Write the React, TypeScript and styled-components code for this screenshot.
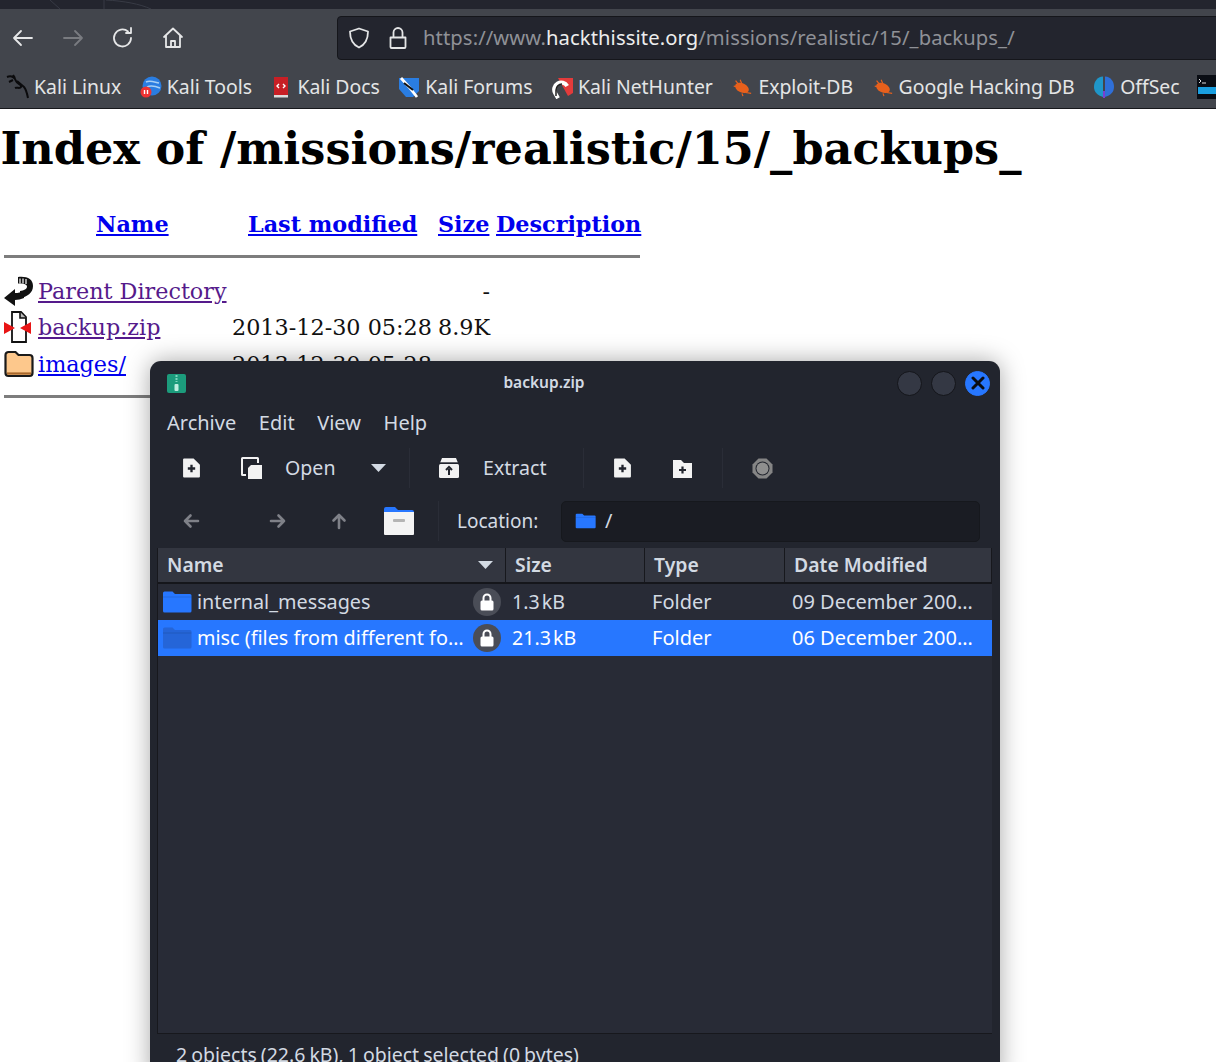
import React from "react"
import styled, { createGlobalStyle } from "styled-components"

const uiFont = `"Noto Sans", "Open Sans", sans-serif`
const pageFont = `"DejaVu Serif", serif`

const GlobalStyle = createGlobalStyle`
  html, body {
    margin: 0;
    padding: 0;
    height: 100%;
    background: #fff;
    overflow: hidden;
  }
`

const Page = styled.div`
  position: relative;
  width: 1216px;
  height: 1062px;
  overflow: hidden;
  display: flex;
  flex-direction: column;
`

const TopStrip = styled.div`
  height: 9px;
  flex: none;
  background: #23252e;
  line-height: 0;
`

const NavBar = styled.div`
  height: 58px;
  flex: none;
  background: #42454c;
  display: flex;
  align-items: center;
  padding-left: 11px;
`

const NavButton = styled.div<{ $gap: number }>`
  width: 24px;
  height: 24px;
  margin-right: ${(p) => p.$gap}px;
  flex: none;
`

const UrlBar = styled.div`
  margin-left: 152px;
  margin-top: -1px;
  flex: 1;
  height: 44px;
  margin-right: -12px;
  box-sizing: border-box;
  background: #23252e;
  border: 1px solid #15161b;
  border-radius: 4px;
  display: flex;
  align-items: center;
  padding-left: 9px;
  gap: 17px;
  font: 20.2px/1 ${uiFont};
  color: #8f9197;
`

const UrlText = styled.span`
  margin-left: -2px;
  white-space: nowrap;
  letter-spacing: 0.1px;
`

const Domain = styled.span`
  color: #eceded;
`

const Bookmarks = styled.div`
  height: 42px;
  flex: none;
  box-sizing: border-box;
  padding: 0 0 2px 6px;
  background: #42454c;
  border-bottom: 1px solid #17181c;
  display: flex;
  align-items: center;
  gap: 17.5px;
  overflow: hidden;
  font: 19.4px/1.3 ${uiFont};
  color: #e4e5e6;
  white-space: nowrap;
`

const Bookmark = styled.div`
  display: flex;
  align-items: center;
  gap: 4px;
  flex: none;
`

const BookmarkIcon = styled.div`
  width: 24px;
  height: 24px;
  display: flex;
  align-items: center;
  justify-content: center;
  flex: none;
`

const Content = styled.main`
  font: 22.3px/36.5px ${pageFont};
  color: #111;
  flex: 1;
`

const Title = styled.h1`
  margin: 14px 0 0 0.5px;
  font: bold 44.6px/52px ${pageFont};
  white-space: nowrap;
  color: #000;
`

const Listing = styled.div`
  margin: 31px 0 0 4px;
  width: 636px;
`

const Row = styled.div`
  display: grid;
  grid-template-columns: 34px 194px 206px 52px 1fr;
  align-items: center;
  height: 36.5px;
  white-space: nowrap;
`

const HeadCell = styled.span<{ $indent?: number }>`
  margin-left: ${(p) => p.$indent || 0}px;
  font-weight: bold;
`

const Rule = styled.div<{ $before: number; $after: number }>`
  height: 3px;
  background: #7d7d7d;
  margin: ${(p) => p.$before}px 0 ${(p) => p.$after}px;
`

const FileLink = styled.a<{ $visited?: boolean }>`
  color: ${(p) => (p.$visited ? "#551a8b" : "#0000ee")};
  text-decoration: underline;
`

const Num = styled.span`
  text-align: right;
`

const Window = styled.section`
  position: absolute;
  left: 150px;
  top: 361px;
  width: 850px;
  height: 720px;
  background: #22252e;
  border-radius: 11px 11px 0 0;
  box-shadow: 0 0 24px rgba(0, 0, 0, 0.35);
  display: flex;
  flex-direction: column;
  font: 20px/1.4 ${uiFont};
  color: #d3dae3;
`

const TitleBar = styled.div`
  height: 44px;
  position: relative;
  display: flex;
  align-items: center;
  justify-content: center;
  flex: none;
  font-weight: 600;
  font-size: 15.5px;
  padding-right: 62px;
`

const AppIcon = styled.div`
  position: absolute;
  left: 17px;
  top: 13px;
  width: 19px;
  height: 19px;
`

const WinButtons = styled.div`
  position: absolute;
  right: 10px;
  top: 9.5px;
  display: flex;
  gap: 9px;
`

const WinButton = styled.div<{ $active?: boolean }>`
  width: 25px;
  height: 25px;
  border-radius: 50%;
  box-sizing: border-box;
  background: ${(p) => (p.$active ? "#2777ff" : "#343844")};
  border: 1.5px solid ${(p) => (p.$active ? "#2777ff" : "#14151a")};
  display: flex;
  align-items: center;
  justify-content: center;
`

const MenuBar = styled.div`
  height: 36px;
  display: flex;
  align-items: center;
  padding-left: 17px;
  gap: 22.6px;
  flex: none;
`

const Toolbar = styled.div`
  height: 54px;
  display: flex;
  align-items: center;
  flex: none;
  padding-left: 10px;
`

const ToolItem = styled.div<{ $w: number; $ml?: number }>`
  width: ${(p) => p.$w}px;
  margin-left: ${(p) => p.$ml || 0}px;
  height: 100%;
  display: flex;
  align-items: center;
  justify-content: center;
  flex: none;
`

const ToolLabel = styled.span<{ $w: number; $ml?: number }>`
  width: ${(p) => p.$w}px;
  margin-left: ${(p) => p.$ml || 0}px;
  font-size: 19.6px;
  flex: none;
`

const Separator = styled.div<{ $ml?: number }>`
  width: 1px;
  height: 40px;
  margin-left: ${(p) => p.$ml || 0}px;
  background: #2a2d37;
  flex: none;
`

const LocationBar = styled.div`
  height: 52px;
  display: flex;
  align-items: center;
  flex: none;
  padding-left: 10px;
`

const LocationLabel = styled.span`
  width: 81px;
  margin: 0 23px 0 18px;
  font-size: 19px;
  white-space: nowrap;
`

const LocationField = styled.div`
  width: 419px;
  height: 41px;
  box-sizing: border-box;
  background: #1a1c23;
  border: 1px solid #16181d;
  border-radius: 5px;
  display: flex;
  align-items: center;
  gap: 9px;
  padding-left: 13px;
  color: #d3dae3;
`

const FileTable = styled.div`
  margin: 1px 8px 0 8px;
  height: 486px;
  flex: none;
  background: #282b36;
  border-bottom: 1px solid #17181d;
  box-shadow: -1px 0 0 #17181d;
  box-sizing: border-box;
  display: flex;
  flex-direction: column;
`

const TableHead = styled.div`
  height: 36px;
  flex: none;
  display: grid;
  grid-template-columns: 348px 139px 140px 1fr;
  background: #333640;
  border-bottom: 2px solid #15161b;
  box-sizing: border-box;
`

const HeaderCell = styled.div`
  display: flex;
  align-items: center;
  justify-content: space-between;
  padding: 0 12px 0 9px;
  border-right: 1px solid #17181d;
  font-weight: 600;
  font-size: 19.4px;
  color: #d3dae3;
`

const FileRow = styled.div<{ $selected?: boolean }>`
  height: 36px;
  flex: none;
  display: grid;
  grid-template-columns: 347px 140px 140px 1fr;
  align-items: center;
  background: ${(p) => (p.$selected ? "#2777ff" : "transparent")};
  color: ${(p) => (p.$selected ? "#fff" : "#d3dae3")};
`

const NameCell = styled.div`
  display: flex;
  align-items: center;
  padding-left: 4px;
  min-width: 0;
  svg {
    flex: none;
  }
`

const FileName = styled.span`
  margin-left: 5px;
  width: 274px;
  font-size: 19.8px;
  white-space: nowrap;
  overflow: hidden;
  text-overflow: ellipsis;
`

const LockBadge = styled.div`
  width: 28px;
  height: 28px;
  border-radius: 50%;
  background: #4a4d57;
  margin-left: 2px;
  flex: none;
  display: flex;
  align-items: center;
  justify-content: center;
`

const TextCell = styled.div`
  padding-left: 7px;
  padding-right: 14px;
  white-space: nowrap;
  overflow: hidden;
  text-overflow: ellipsis;
`

const SizeCell = styled(TextCell)`
  font-size: 19.6px;
  word-spacing: -3px;
`

const StatusBar = styled.div`
  padding: 7px 0 0 26px;
  font-size: 19.5px;
  word-spacing: -1px;
  white-space: nowrap;
`

const Stroke = ({ d, color = "#e6e7e8", w = 1.8 }: { d: string; color?: string; w?: number }) => (
  <svg width="24" height="24" viewBox="0 0 24 24" fill="none" stroke={color} strokeWidth={w} strokeLinecap="round" strokeLinejoin="round">
    <path d={d} />
  </svg>
)

const WallpaperLines = () => (
  <svg width="1216" height="9" viewBox="0 0 1216 9" fill="none" stroke="#383b45" strokeWidth="1">
    <path d="M50 0l10 9M104 0v9M106 0c18 1 34 4 45 9" />
  </svg>
)

const Shield = () => (
  <svg width="24" height="24" viewBox="0 0 24 24" fill="none" stroke="#e4e5e6" strokeWidth="1.8" strokeLinejoin="round">
    <path d="M12 2.5 21 5.5c0 8-2.5 13-9 16-6.5-3-9-8-9-16z" />
  </svg>
)

const Lock = () => (
  <svg width="20" height="24" viewBox="0 0 20 24" fill="none" stroke="#e4e5e6" strokeWidth="1.8" strokeLinejoin="round">
    <path d="M2.5 11.5h15v9.5a1 1 0 0 1-1 1h-13a1 1 0 0 1-1-1zM5.5 11.5V6.5a4.5 4.5 0 0 1 9 0v5" />
  </svg>
)

const Dragon = () => (
  <svg width="24" height="26" viewBox="0 0 24 26" fill="none" stroke="#0b0b0d" strokeWidth="2">
    <path d="M1 3c5-2 8 1 9 4s6 3 5 6c-1 2-4 0-6 1M11 7l7 6c2 2 3 6 4 11M3 8l4-2M9 4l-2-3" />
  </svg>
)

const ToolsIcon = () => (
  <svg width="22" height="24" viewBox="0 0 22 24">
    <circle cx="12" cy="11" r="9.5" fill="#2a7de1" />
    <path d="M6 7c4-2 8 0 13 1M7 12c4-2 8-1 13 1" stroke="#a8d0f5" strokeWidth="1.5" fill="none" />
    <circle cx="6" cy="17" r="5.5" fill="#e33" />
    <path d="M4.5 15v4M7.5 15v4" stroke="#fff" strokeWidth="1.4" />
  </svg>
)

const DocsIcon = () => (
  <svg width="18" height="24" viewBox="0 0 18 24">
    <rect x="2" y="2" width="14" height="18" fill="#c81f25" />
    <rect x="2" y="20" width="14" height="2.5" fill="#ddd" />
    <path d="M7 9l-2 2 2 2M11 9l2 2-2 2" stroke="#fff" strokeWidth="1.4" fill="none" />
  </svg>
)

const ForumsIcon = () => (
  <svg width="24" height="24" viewBox="0 0 24 24">
    <path d="M2 3h20v13l-6 6H9L2 14z" fill="#2a7de1" />
    <path d="M4 3l8 9 8 10" stroke="#fff" strokeWidth="2.8" fill="none" />
    <path d="M7 8l9 7" stroke="#111" strokeWidth="2" />
  </svg>
)

const HunterIcon = () => (
  <svg width="24" height="24" viewBox="0 0 24 24">
    <path d="M8 3h15v15l-5 3z" fill="#e33b3b" />
    <path d="M4 20v-6a7 7 0 0 1 14 0" stroke="#fff" strokeWidth="4" fill="none" transform="rotate(-30 12 14)" />
    <path d="M6 21v-6a6 6 0 0 1 6-6" stroke="#222" strokeWidth="1.5" fill="none" />
  </svg>
)

const BugIcon = () => (
  <svg width="22" height="22" viewBox="0 0 24 24">
    <ellipse cx="12" cy="13" rx="8" ry="5" fill="#e8601c" transform="rotate(25 12 13)" />
    <path d="M5 5l4 5M10 4l2 5M3 11l5 1M16 18l6 1M12 19l1 3" stroke="#e8601c" strokeWidth="1.3" />
  </svg>
)

const OffSecIcon = () => (
  <svg width="22" height="24" viewBox="0 0 22 24">
    <path d="M10 1.5C4 2 1 6.5 1 12c0 5 3.5 8.5 9 10z" fill="#1f96c9" />
    <path d="M12 1.5c6 .5 9 5 9 10.5 0 5-3.500 8.500-9 10z" fill="#2f6fd8" />
    <path d="M10 16h2v7h-2z" fill="#7a3fd0" />
  </svg>
)

const HtbIcon = () => (
  <svg width="24" height="24" viewBox="0 0 24 24">
    <rect width="24" height="24" fill="#0a0d14" />
    <path d="M2 4l2 2-2 2M5 8h4" stroke="#ddd" fill="none" />
    <rect x="1" y="12" width="22" height="7" fill="#1a9fe0" />
  </svg>
)

const ParentIcon = () => (
  <svg width="30" height="30" viewBox="0 0 30 30">
    <path d="M14 1c9-1 15 2 15 9 0 7-6 11-13 12v-7c4-.5 7-2 7-4.500 0-2.500-4-3-9-3z" fill="#111" />
    <path d="M16 2.500v5M19 2.500v5M22 3v5" stroke="#fff" strokeWidth="1.200" />
    <path d="M0 22l11-9v4c3 0 6-.5 9-2v7c-3 1-6 2-9 2v6z" fill="#111" />
  </svg>
)

const ZipIcon = () => (
  <svg width="28" height="32" viewBox="0 0 28 32">
    <path d="M8 1h9l5 5v25H8z" fill="#fff" stroke="#111" strokeWidth="1.8" />
    <path d="M16 1v6h6" fill="#bbb" stroke="#111" strokeWidth="1.600" />
    <path d="M0 11l11 6-11 6zM27 11l-11 6 11 6z" fill="#e81515" />
  </svg>
)

const OrangeFolder = () => (
  <svg width="30" height="28" viewBox="0 0 30 28">
    <path d="M1.500 5a3 3 0 0 1 3-3h7l3 3h11a3 3 0 0 1 3 3v15a3 3 0 0 1-3 3h-21a3 3 0 0 1-3-3z" fill="#fdc88c" stroke="#1a1a1a" strokeWidth="2.200" />
    <path d="M3 23.500h24" stroke="#a8672b" strokeWidth="2.200" />
  </svg>
)

const ZipApp = () => (
  <svg width="19" height="19" viewBox="0 0 19 19">
    <rect width="19" height="19" rx="2" fill="#1c9c7c" />
    <path d="M9.500 1v7" stroke="#7fd6bd" strokeWidth="2" strokeDasharray="2 1" />
    <rect x="7.500" y="10" width="4" height="7" rx="1" fill="#bfeee0" />
  </svg>
)

const NewDoc = () => (
  <svg width="17" height="20" viewBox="0 0 16 19">
    <path d="M0 1.500a1 1 0 0 1 1-1h9l6 6v11a1 1 0 0 1-1 1H1a1 1 0 0 1-1-1z" fill="#f2f2f2" />
    <path d="M8 6.500v7M4.500 10h7" stroke="#22252e" strokeWidth="2.200" />
  </svg>
)

const CopyDoc = () => (
  <svg width="21" height="22" viewBox="0 0 21 22">
    <rect x="1" y="1" width="16" height="17" rx="0.500" fill="none" stroke="#f2f2f2" strokeWidth="2" />
    <rect x="5" y="6" width="16" height="16" fill="#22252e" />
    <path d="M10 8h11v14H7V11z" fill="#f2f2f2" />
  </svg>
)

const ExtractIcon = () => (
  <svg width="20" height="20" viewBox="0 0 20 20">
    <path d="M3 0h14l2 5H1z" fill="#f2f2f2" />
    <rect x="0" y="6" width="20" height="14" rx="1.500" fill="#f2f2f2" />
    <path d="M1 5h18" stroke="#22252e" strokeWidth="1.400" />
    <path d="M10 17v-6M7 12l3-3 3 3" stroke="#22252e" strokeWidth="2" fill="none" />
  </svg>
)

const AddFolder = () => (
  <svg width="21" height="19" viewBox="0 0 21 19">
    <path d="M1 1h8l3 3h8v15H1z" fill="#f2f2f2" />
    <path d="M10.500 7.500v7M7 11h7" stroke="#22252e" strokeWidth="2.200" />
  </svg>
)

const StopIcon = () => (
  <svg width="21" height="21" viewBox="0 0 21 21">
    <path d="M6.500 .5h8l6 6v8l-6 6h-8l-6-6v-8z" fill="#858585" />
    <circle cx="10.500" cy="10.500" r="7" fill="#22252e" />
    <circle cx="10.500" cy="10.500" r="6" fill="#8f8f8f" />
  </svg>
)

const HomeFolder = () => (
  <svg width="32" height="30" viewBox="0 0 32 30">
    <path d="M1 3a2 2 0 0 1 2-2h9l3 3h14a2 2 0 0 1 2 2v6H1z" fill="#2777ff" />
    <path d="M1 6h30v22a1 1 0 0 1-1 1H2a1 1 0 0 1-1-1z" fill="#f4f4f4" />
    <rect x="10" y="13" width="12" height="3" rx="1" fill="#b5b5b5" />
  </svg>
)

const BlueFolder = ({ w, h, color = "#2777ff" }: { w: number; h: number; color?: string }) => (
  <svg width={w} height={h} viewBox="0 0 30 22">
    <path d="M1 2a1.500 1.500 0 0 1 1.500-1.500h8L13 3h15a1.500 1.500 0 0 1 1.500 1.500V20a1.500 1.500 0 0 1-1.500 1.500H2.500A1.500 1.500 0 0 1 1 20z" fill={color} />
    <path d="M1 6h28.500" stroke="#000" strokeOpacity="0.12" />
  </svg>
)

const LockGlyph = () => (
  <svg width="16" height="18" viewBox="0 0 16 18">
    <path d="M4.500 8V5a3.500 3.500 0 0 1 7 0v3" fill="none" stroke="#fff" strokeWidth="2" />
    <rect x="1.500" y="7.500" width="13" height="10" rx="1.500" fill="#fff" />
  </svg>
)

const Caret = ({ w = 15 }: { w?: number }) => (
  <svg width={w} height="8" viewBox="0 0 15 8">
    <path d="M0 0h15L7.500 8z" fill="#d3dae3" />
  </svg>
)

const CloseGlyph = () => (
  <svg width="14" height="14" viewBox="0 0 14 14">
    <path d="M2 2l10 10M12 2L2 12" stroke="#0b0d12" strokeWidth="3" strokeLinecap="round" />
  </svg>
)

const bookmarks = [
  { label: "Kali Linux", icon: <Dragon /> },
  { label: "Kali Tools", icon: <ToolsIcon /> },
  { label: "Kali Docs", icon: <DocsIcon /> },
  { label: "Kali Forums", icon: <ForumsIcon /> },
  { label: "Kali NetHunter", icon: <HunterIcon /> },
  { label: "Exploit-DB", icon: <BugIcon /> },
  { label: "Google Hacking DB", icon: <BugIcon /> },
  { label: "OffSec", icon: <OffSecIcon /> },
  { label: "", icon: <HtbIcon /> },
]

const arrowGray = "#7f8188"

export default function App() {
  return (
    <Page>
      <GlobalStyle />
      <TopStrip><WallpaperLines /></TopStrip>
      <NavBar>
        <NavButton $gap={26}><Stroke d="M21 12H3M10 5l-7 7 7 7" /></NavButton>
        <NavButton $gap={26}><Stroke d="M3 12h18M14 5l7 7-7 7" color="#797b80" /></NavButton>
        <NavButton $gap={26}><Stroke d="M20 12a8.500 8.500 0 1 1-3-6.500M20 2v5h-5" /></NavButton>
        <NavButton $gap={0}><Stroke d="M3 11l9-8.500L21 11M5 9.500V21h14V9.500M10 21v-6h4v6" /></NavButton>
        <UrlBar>
          <Shield />
          <Lock />
          <UrlText>
            https://www.<Domain>hackthissite.org</Domain>/missions/realistic/15/_backups_/
          </UrlText>
        </UrlBar>
      </NavBar>
      <Bookmarks>
        {bookmarks.map((b, i) => (
          <Bookmark key={i}>
            <BookmarkIcon>{b.icon}</BookmarkIcon>
            {b.label}
          </Bookmark>
        ))}
      </Bookmarks>
      <Content>
        <Title>Index of /missions/realistic/15/_backups_</Title>
        <Listing>
          <Row>
            <span />
            <HeadCell $indent={58}><FileLink>Name</FileLink></HeadCell>
            <HeadCell $indent={16}><FileLink>Last modified</FileLink></HeadCell>
            <HeadCell><FileLink>Size</FileLink></HeadCell>
            <HeadCell $indent={6}><FileLink>Description</FileLink></HeadCell>
          </Row>
          <Rule $before={12} $after={15} />
          <Row>
            <ParentIcon />
            <FileLink $visited>Parent Directory</FileLink>
            <span />
            <Num>-</Num>
            <span />
          </Row>
          <Row>
            <ZipIcon />
            <FileLink $visited>backup.zip</FileLink>
            <span>2013-12-30 05:28</span>
            <Num>8.9K</Num>
            <span />
          </Row>
          <Row>
            <OrangeFolder />
            <FileLink>images/</FileLink>
            <span>2013-12-30 05:28</span>
            <Num>-</Num>
            <span />
          </Row>
          <Rule $before={13} $after={0} />
        </Listing>
      </Content>

      <Window>
        <TitleBar>
          <AppIcon><ZipApp /></AppIcon>
          backup.zip
          <WinButtons>
            <WinButton />
            <WinButton />
            <WinButton $active><CloseGlyph /></WinButton>
          </WinButtons>
        </TitleBar>
        <MenuBar>
          <span>Archive</span>
          <span>Edit</span>
          <span>View</span>
          <span>Help</span>
        </MenuBar>
        <Toolbar>
          <ToolItem $w={62}><NewDoc /></ToolItem>
          <ToolItem $w={58}><CopyDoc /></ToolItem>
          <ToolLabel $w={86} $ml={5}>Open</ToolLabel>
          <Caret />
          <Separator $ml={23} />
          <ToolItem $w={22} $ml={28}><ExtractIcon /></ToolItem>
          <ToolLabel $w={100} $ml={23}>Extract</ToolLabel>
          <Separator />
          <ToolItem $w={76}><NewDoc /></ToolItem>
          <ToolItem $w={44}><AddFolder /></ToolItem>
          <Separator $ml={18} />
          <ToolItem $w={78}><StopIcon /></ToolItem>
        </Toolbar>
        <LocationBar>
          <ToolItem $w={62}><Stroke d="M19 12H6M11.500 6.500 6 12l5.500 5.500" color={arrowGray} w={2.6} /></ToolItem>
          <ToolItem $w={60} $ml={26}><Stroke d="M5 12h13M12.500 6.500 18 12l-5.500 5.500" color={arrowGray} w={2.6} /></ToolItem>
          <ToolItem $w={62}><Stroke d="M12 19V6M6.500 11.500 12 6l5.500 5.500" color={arrowGray} w={2.6} /></ToolItem>
          <ToolItem $w={58}><HomeFolder /></ToolItem>
          <Separator $ml={10} />
          <LocationLabel>Location:</LocationLabel>
          <LocationField>
            <BlueFolder w={21} h={16} />/
          </LocationField>
        </LocationBar>
        <FileTable>
          <TableHead>
            <HeaderCell>Name<Caret /></HeaderCell>
            <HeaderCell>Size</HeaderCell>
            <HeaderCell>Type</HeaderCell>
            <HeaderCell>Date Modified</HeaderCell>
          </TableHead>
          <FileRow>
            <NameCell>
              <BlueFolder w={30} h={22} />
              <FileName>internal_messages</FileName>
              <LockBadge><LockGlyph /></LockBadge>
            </NameCell>
            <SizeCell>1.3 kB</SizeCell>
            <TextCell>Folder</TextCell>
            <TextCell>09 December 2009, 12:00</TextCell>
          </FileRow>
          <FileRow $selected>
            <NameCell>
              <BlueFolder w={30} h={22} color="#2565d8" />
              <FileName>misc (files from different forums)</FileName>
              <LockBadge><LockGlyph /></LockBadge>
            </NameCell>
            <SizeCell>21.3 kB</SizeCell>
            <TextCell>Folder</TextCell>
            <TextCell>06 December 2009, 12:00</TextCell>
          </FileRow>
        </FileTable>
        <StatusBar>2 objects (22.6 kB), 1 object selected (0 bytes)</StatusBar>
      </Window>
    </Page>
  )
}
